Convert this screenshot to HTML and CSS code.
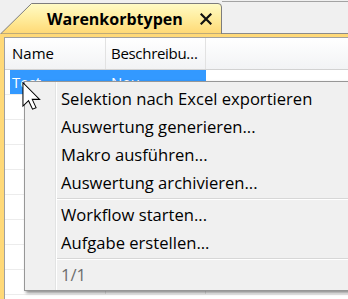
FILE: index.html
```html
<!DOCTYPE html>
<html>
<head>
<meta charset="utf-8">
<link rel="stylesheet" href="styles.css">
</head>
<body>
<div class="tabbar">
  <div class="tab">
    <svg class="tab-shape" viewBox="0 0 222 34" width="222" height="34">
      <defs>
        <linearGradient id="tg" x1="0" y1="0" x2="0" y2="1">
          <stop offset="0" stop-color="#fffbc6"/>
          <stop offset="0.5" stop-color="#ffec9c"/>
          <stop offset="1" stop-color="#ffd874"/>
        </linearGradient>
      </defs>
      <path d="M0.5,34 L31.5,3.5 L218,3.5 Q221.5,3.5 221.5,7 L221.5,34 Z" fill="url(#tg)" stroke="#7d7d7d" stroke-width="1"/>
    </svg>
    <span class="tab-title">Warenkorbtypen</span>
    <svg class="tab-close" viewBox="0 0 12 12" width="12" height="12">
      <path d="M1.5,1.5 L10.5,10.5 M10.5,1.5 L1.5,10.5" stroke="#111" stroke-width="2.2" stroke-linecap="square"/>
    </svg>
  </div>
  <div class="tabbar-rest"></div>
</div>
<div class="strip"></div>
<div class="panel">
  <div class="grid">
    <div class="row header">
      <div class="cell ind"></div>
      <div class="cell c1">Name</div>
      <div class="cell c2">Beschreibu…</div>
      <div class="cell c3"></div>
    </div>
    <div class="row selected">
      <div class="cell ind"></div>
      <div class="cell c1">Test</div>
      <div class="cell c2">Neu</div>
      <div class="cell c3"></div>
    </div>
    <div class="row"><div class="cell ind"></div><div class="cell c1"></div><div class="cell c2"></div><div class="cell c3"></div></div>
    <div class="row"><div class="cell ind"></div><div class="cell c1"></div><div class="cell c2"></div><div class="cell c3"></div></div>
    <div class="row"><div class="cell ind"></div><div class="cell c1"></div><div class="cell c2"></div><div class="cell c3"></div></div>
    <div class="row"><div class="cell ind"></div><div class="cell c1"></div><div class="cell c2"></div><div class="cell c3"></div></div>
    <div class="row"><div class="cell ind"></div><div class="cell c1"></div><div class="cell c2"></div><div class="cell c3"></div></div>
    <div class="row"><div class="cell ind"></div><div class="cell c1"></div><div class="cell c2"></div><div class="cell c3"></div></div>
    <div class="row"><div class="cell ind"></div><div class="cell c1"></div><div class="cell c2"></div><div class="cell c3"></div></div>
    <div class="row"><div class="cell ind"></div><div class="cell c1"></div><div class="cell c2"></div><div class="cell c3"></div></div>
  </div>
</div>

<div class="menu">
  <div class="item">Selektion nach Excel exportieren</div>
  <div class="item">Auswertung generieren...</div>
  <div class="item">Makro ausführen...</div>
  <div class="item">Auswertung archivieren...</div>
  <div class="sep"></div>
  <div class="item">Workflow starten...</div>
  <div class="item">Aufgabe erstellen...</div>
  <div class="sep"></div>
  <div class="item disabled">1/1</div>
</div>

<svg class="cursor" viewBox="0 0 12.6 19" width="19" height="28">
  <path d="M0.5,0.5 L0.5,16.3 L4.3,12.7 L7,18.4 L9.4,17.4 L6.8,11.8 L11.8,11.8 Z" fill="#fff" stroke="#000" stroke-width="0.7" stroke-linejoin="miter"/>
</svg>
</body>
</html>
```
FILE: styles.css
```css
html, body {
  margin: 0;
  padding: 0;
}
body {
  width: 348px;
  height: 299px;
  overflow: hidden;
  background: #f0f0f0;
  font-family: "Open Sans", "Noto Sans", sans-serif;
  position: relative;
  color: #000;
}

.tabbar {
  display: flex;
  height: 34px;
}
.tab {
  position: relative;
  width: 222px;
  flex: none;
  display: flex;
  align-items: center;
  padding-left: 47px;
  padding-top: 3px;
  box-sizing: border-box;
}
.tab-shape {
  position: absolute;
  left: 0;
  top: 0;
}
.tab-title {
  position: relative;
  font-weight: 700;
  font-size: 16px;
}
.tab-close {
  position: relative;
  margin-left: 17px;
}
.tabbar-rest {
  flex: 1;
  border-top: 1px solid #a3a3a3;
  margin-top: 1px;
  border-bottom: 1px solid #8a8a8a;
}

.strip {
  height: 3px;
  background: #ffd978;
}

.panel {
  display: flex;
  border-left: 4px solid #ffd978;
  height: 262px;
}
.grid {
  flex: 1;
  background: #fff;
  border-left: 1px solid #a0a0a0;
  border-top: 1px solid #a0a0a0;
  font-size: 15px;
}
.row {
  display: grid;
  grid-template-columns: 5px 96px 100px 1fr;
  height: 25px;
  box-sizing: border-box;
  border-bottom: 1px solid #ececec;
}
.cell {
  box-sizing: border-box;
  line-height: 24px;
  white-space: nowrap;
  overflow: hidden;
}
.c1, .c2 {
  border-right: 1px solid #e8e8e8;
}
.c1 { padding-left: 2px; }
.c2 { padding-left: 5px; }

.header {
  height: 32px;
  background: linear-gradient(#ffffff, #f2f3f5);
  border-bottom: 1px solid #d2d2d2;
}
.header .cell {
  line-height: 31px;
}
.header .c2 {
  letter-spacing: -0.3px;
}
.header .c1, .header .c2 {
  border-right-color: #e2e2e2;
}

.selected .c1, .selected .c2 {
  background: #3399ff;
  color: #fff;
  border-right-color: #3399ff;
}

.menu {
  position: absolute;
  left: 24px;
  top: 81px;
  width: 340px;
  background: linear-gradient(to right, #f0f0f0 30px, #e2e3e3 30px, #e2e3e3 31px, #ffffff 31px, #ffffff 32px, #f0f0f0 32px);
  border: 1px solid #979797;
  box-shadow: 2px 2px 3px rgba(0, 0, 0, 0.45);
  padding: 3px 0 1px;
  font-size: 16.6px;
}
.item {
  height: 28px;
  line-height: 28px;
  padding-left: 36px;
  white-space: nowrap;
}
.item.disabled {
  color: #6d6d6d;
}
.sep {
  margin: 1px 0 1px 32px;
  height: 1px;
  background: #d7d7d7;
  border-bottom: 1px solid #ffffff;
}

.cursor {
  position: absolute;
  left: 22px;
  top: 82px;
}
```
